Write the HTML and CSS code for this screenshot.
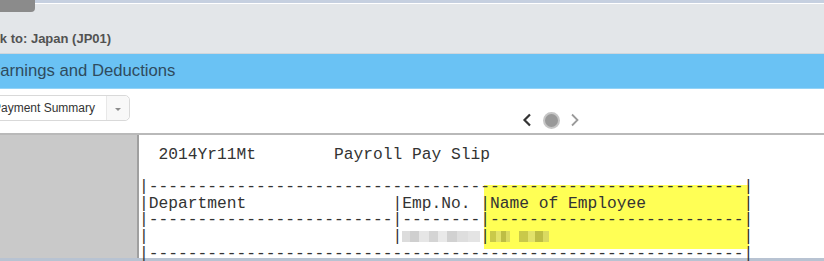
FILE: index.html
```html
<!DOCTYPE html>
<html lang="en">
<head>
    <meta charset="UTF-8">
    <meta name="viewport" content="width=device-width, initial-scale=1.0">
    <link rel="stylesheet" href="styles.css">
    <title>Earnings and Deductions</title>
</head>
<body>
    <div class="topStrip"></div>
    <button class="backButton" aria-label="Back"></button>

    <div class="crumbBar">
        <span class="crumbText">Back to: Japan (JP01)</span>
    </div>

    <div class="sectionBar">
        <h1 class="sectionTitle">Earnings and Deductions</h1>
    </div>

    <div class="toolBar">
        <div class="reportSelect">
            <span class="reportSelectText">Payment Summary</span>
            <span class="reportSelectArrow"><span class="caret"></span></span>
        </div>
        <div class="pager">
            <svg class="pagerPrev" width="10" height="14" viewBox="0 0 10 14">
                <polyline points="8,1.5 2.5,7 8,12.5" fill="none" stroke="#333" stroke-width="2.2"/>
            </svg>
            <span class="pagerDot"></span>
            <svg class="pagerNext" width="10" height="14" viewBox="0 0 10 14">
                <polyline points="2,1.5 7.5,7 2,12.5" fill="none" stroke="#9a9a9a" stroke-width="1.8"/>
            </svg>
        </div>
    </div>

    <div class="viewer">
        <div class="viewerSide"></div>
        <div class="paper">
            <div class="highlight"></div>
<pre class="slipTitle">  2014Yr11Mt        Payroll Pay Slip</pre>
<pre class="slipTable">|-------------------------------------------------------------|
|Department               |Emp.No. |Name of Employee          |
|-------------------------|--------|--------------------------|
|                         |<span class="blurGray"></span>|<span class="blurName blurShort"></span> <span class="blurName blurLong"></span>                    |
|-------------------------------------------------------------|</pre>
        </div>
    </div>
    <div class="bottomStrip"></div>
</body>
</html>
```

FILE: styles.css
```css
body {
    margin: 0;
    padding: 0;
    width: 824px;
    height: 261px;
    overflow: hidden;
    background-color: #ffffff;
    font-family: "Liberation Sans", Arial, sans-serif;
}

.topStrip {
    height: 3px;
    background-color: #c6d0e0;
    border-bottom: 1px solid #ffffff;
}

/* cut-off button sitting over the top strip */
.backButton {
    position: absolute;
    top: 0;
    left: 0;
    width: 35px;
    height: 12px;
    padding: 0;
    border: none;
    border-bottom-right-radius: 4px;
    background-color: #8b8b8b;
}

.crumbBar {
    height: 24px;
    padding-top: 25px;
    background-color: #e3e6e9;
    border-bottom: 1px solid #cfd6dc;
    white-space: nowrap;
}

.crumbText {
    display: inline-block;
    margin-left: -24px;
    font-size: 13px;
    line-height: 15px;
    font-weight: bold;
    color: #525252;
}

.sectionBar {
    height: 34px;
    background-color: #6ac2f4;
    border-bottom: 1px solid #93d3f7;
    white-space: nowrap;
}

.sectionTitle {
    margin: 0 0 0 -11px;
    font-size: 16.7px;
    line-height: 34px;
    font-weight: normal;
    color: #2f4b5e;
}

.toolBar {
    display: flex;
    align-items: flex-start;
    height: 44px;
}

.reportSelect {
    display: flex;
    margin-top: 6px;
    margin-left: -20px;
    width: 150px;
    height: 26px;
    box-sizing: border-box;
    border: 1px solid #d9d9d9;
    border-radius: 5px;
    background-color: #ffffff;
}

.reportSelectText {
    flex: 1;
    padding-left: 12px;
    font-size: 12px;
    line-height: 24px;
    color: #333333;
}

.reportSelectArrow {
    display: flex;
    align-items: center;
    justify-content: center;
    width: 22px;
    border-left: 1px solid #e8e8e8;
    border-radius: 0 5px 5px 0;
    background-color: #f8f8f8;
}

.caret {
    width: 0;
    height: 0;
    margin-top: 2px;
    border-left: 3px solid transparent;
    border-right: 3px solid transparent;
    border-top: 3px solid #8c8c8c;
}

.pager {
    display: flex;
    align-items: center;
    height: 18px;
    margin-top: 22px;
    margin-left: 392px;
}

.pagerDot {
    width: 17px;
    height: 17px;
    margin: 0 10px 0 11px;
    box-sizing: border-box;
    border: 2px solid #c6c6c6;
    border-radius: 50%;
    background-color: #999999;
}

.viewer {
    display: flex;
    height: 123px;
    border-top: 2px solid #b9b9b9;
}

.viewerSide {
    width: 137px;
    background-color: #c9c9c9;
}

.paper {
    flex: 1;
    position: relative;
    background-color: #ffffff;
    border-left: 2px solid #9f9f9f;
}

.highlight {
    position: absolute;
    top: 50px;
    left: 345px;
    width: 265px;
    height: 64px;
    background-color: #ffff55;
}

.slipTitle,
.slipTable {
    position: relative;
    margin: 0;
    font-family: "Liberation Mono", "Courier New", monospace;
    font-size: 16.25px;
    line-height: 16.8px;
    color: #333333;
}

.slipTitle {
    padding-top: 12px;
}

.slipTable {
    margin-top: 15px;
}

/* pixelated personal data */
.blurGray,
.blurName {
    display: inline-block;
    height: 11px;
    vertical-align: -1px;
}

.blurGray {
    width: 8ch;
    background: linear-gradient(90deg, #dcdcdc 0 10%, #cfcfcf 10% 22%, #e6e6e6 22% 34%, #d4d4d4 34% 46%, #e9e9e9 46% 58%, #d1d1d1 58% 70%, #dedede 70% 84%, #e4e4e4 84% 100%);
}

.blurName {
    background: linear-gradient(90deg, #c9c94a 0 30%, #e2e26a 30% 55%, #bdbd45 55% 80%, #dada60 80% 100%);
}

.blurShort {
    width: 2ch;
}

.blurLong {
    width: 3ch;
}

.bottomStrip {
    height: 3px;
    background-color: #b8c3d2;
}
```
